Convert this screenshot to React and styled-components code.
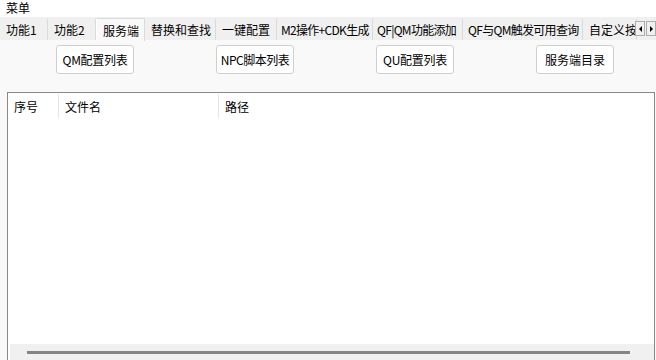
import styled, { createGlobalStyle } from "styled-components";

const GlobalStyle = createGlobalStyle`
    html, body {
        margin: 0;
        padding: 0;
        background: #f9f9f9;
        font-family: "Noto Sans CJK SC", "DejaVu Sans", sans-serif;
        font-size: 12px;
        color: #000;
    }
`;

const Window = styled.div`
    width: 656px;
    height: 360px;
    overflow: hidden;
    display: flex;
    flex-direction: column;
    background: #f9f9f9;
`;

const MenuTitle = styled.div`
    height: 17px;
    line-height: 15px;
    padding-left: 6px;
    background: #ffffff;
`;

const TabStrip = styled.div`
    height: 23px;
    display: flex;
    align-items: flex-end;
    background: #f0f0f0;
    border-bottom: 1px solid #f9f9f9;
    position: relative;
`;

const Tab = styled.div`
    flex: none;
    width: ${(p) => p.$w}px;
    height: ${(p) => (p.$active ? 23 : 21)}px;
    box-sizing: border-box;
    display: flex;
    align-items: center;
    padding-left: ${(p) => p.$pad ?? 6}px;
    white-space: nowrap;
    overflow: hidden;
    background: ${(p) => (p.$active ? "#f9f9f9" : "#f0f0f0")};
    border-right: 1px solid #dadada;
    border-top: ${(p) => (p.$active ? "1px solid #dadada" : "none")};
    border-left: ${(p) => (p.$active ? "1px solid #ffffff" : "none")};
    margin-bottom: ${(p) => (p.$active ? -1 : 0)}px;
    letter-spacing: ${(p) => p.$ls || 0}px;
`;

const TabScroller = styled.div`
    position: absolute;
    right: 0;
    top: 4px;
    display: flex;
`;

const ScrollArrow = styled.div`
    width: 10px;
    height: 15px;
    box-sizing: border-box;
    border: 1px solid #adadad;
    background: #f0f0f0;
    display: flex;
    align-items: center;
    justify-content: center;
    margin-left: 1px;
`;

const Triangle = styled.div`
    width: 0;
    height: 0;
    border-top: 3px solid transparent;
    border-bottom: 3px solid transparent;
    ${(p) => (p.$dir === "left" ? "border-right: 3px solid #000;" : "border-left: 3px solid #000;")}
`;

const ButtonRow = styled.div`
    display: flex;
    gap: 82px;
    padding: 4px 0 0 56px;
    height: 29px;
`;

const ToolButton = styled.button`
    width: 78px;
    height: 29px;
    box-sizing: border-box;
    border: 1px solid #cfcfcf;
    border-radius: 3px;
    background: #ffffff;
    font-family: inherit;
    font-size: 12px;
    color: #000;
    padding: 0;
    white-space: nowrap;
    letter-spacing: ${(p) => p.$ls || 0}px;
`;

const ListPanel = styled.div`
    margin: 18px 1px 0 7px;
    flex: 1;
    box-sizing: border-box;
    border: 1px solid #888;
    border-bottom: none;
    background: #ffffff;
    display: flex;
    flex-direction: column;
`;

const HeaderRow = styled.div`
    display: flex;
    height: 24px;
    padding-top: 1px;
`;

const HeaderCell = styled.div`
    width: ${(p) => p.$w}px;
    flex: ${(p) => (p.$grow ? 1 : "none")};
    box-sizing: border-box;
    padding-left: 6px;
    display: flex;
    align-items: center;
    border-right: ${(p) => (p.$grow ? "none" : "1px solid #e5e5e5")};
`;

const ListBody = styled.div`
    flex: 1;
`;

const HScrollBar = styled.div`
    height: 16px;
    margin-left: 2px;
    background: #f0f0f0;
    position: relative;
`;

const HThumb = styled.div`
    position: absolute;
    left: 17px;
    top: 7px;
    width: 603px;
    height: 3px;
    background: #858585;
`;

const tabs = [
    { label: "功能1", w: 48 },
    { label: "功能2", w: 48 },
    { label: "服务端", w: 49, active: true },
    { label: "替换和查找", w: 71 },
    { label: "一键配置", w: 61 },
    { label: "M2操作+CDK生成", w: 96, ls: -0.7, pad: 4 },
    { label: "QF|QM功能添加", w: 90, ls: -0.7, pad: 4 },
    { label: "QF与QM触发可用查询", w: 120, ls: -0.7, pad: 5 },
    { label: "自定义按", w: 54 },
];

const buttons = [
    { label: "QM配置列表", ls: -0.3 },
    { label: "NPC脚本列表", ls: -0.5 },
    { label: "QU配置列表", ls: -0.3 },
    { label: "服务端目录" },
];

export default function App() {
    return (
        <Window>
            <GlobalStyle />
            <MenuTitle>菜单</MenuTitle>
            <TabStrip>
                {tabs.map((t) => (
                    <Tab key={t.label} $w={t.w} $active={t.active} $ls={t.ls} $pad={t.pad}>
                        {t.label}
                    </Tab>
                ))}
                <TabScroller>
                    <ScrollArrow>
                        <Triangle $dir="left" />
                    </ScrollArrow>
                    <ScrollArrow>
                        <Triangle $dir="right" />
                    </ScrollArrow>
                </TabScroller>
            </TabStrip>
            <ButtonRow>
                {buttons.map((b) => (
                    <ToolButton key={b.label} $ls={b.ls}>
                        {b.label}
                    </ToolButton>
                ))}
            </ButtonRow>
            <ListPanel>
                <HeaderRow>
                    <HeaderCell $w={51}>序号</HeaderCell>
                    <HeaderCell $w={160}>文件名</HeaderCell>
                    <HeaderCell $grow>路径</HeaderCell>
                </HeaderRow>
                <ListBody />
                <HScrollBar>
                    <HThumb />
                </HScrollBar>
            </ListPanel>
        </Window>
    );
}
